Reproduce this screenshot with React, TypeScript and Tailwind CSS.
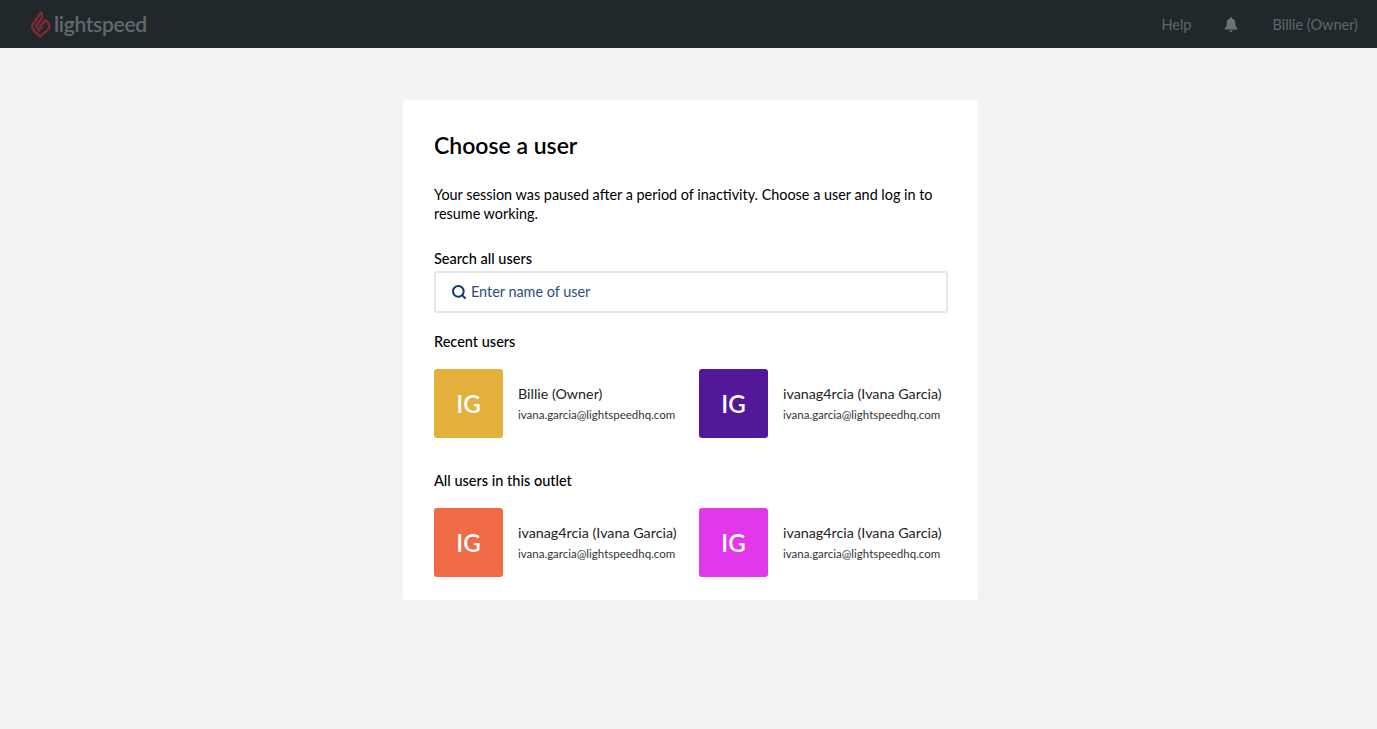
import { Search } from "lucide-react";

const recentUsers = [
  { name: "Billie (Owner)", color: "bg-[#e4b03c]" },
  { name: "ivanag4rcia (Ivana Garcia)", color: "bg-[#53179a]" },
];

const outletUsers = [
  { name: "ivanag4rcia (Ivana Garcia)", color: "bg-[#ef6a45]" },
  { name: "ivanag4rcia (Ivana Garcia)", color: "bg-[#e138ea]" },
];

function UserTile({ name, color }: { name: string; color: string }) {
  return (
    <div className="flex items-center">
      <div className={`flex h-[69px] w-[69px] shrink-0 items-center justify-center rounded-[3px] text-[24px] font-semibold text-white ${color}`}>
        IG
      </div>
      <div className="ml-[15px] whitespace-nowrap">
        <div className="text-[14.3px] leading-[20px] text-[#1d2327]">{name}</div>
        <div className="mt-[2px] text-[11.5px] leading-[18px] text-[#2f3538]">ivana.garcia@lightspeedhq.com</div>
      </div>
    </div>
  );
}

function Logo() {
  return (
    <div className="flex items-center">
      <svg width="20" height="28" viewBox="0 0 20 28" fill="none" stroke="#7a2a30" strokeWidth="2.6" strokeLinejoin="round">
        <path d="M10.5 1.8 L2 14 C0.6 16.2 1 18.5 2.6 20.3 L9 26.4 L16.6 20 C18.6 18 18.8 15.6 17.4 13.6 L15 10 L9.2 16 L11.6 18.6" />
        <path d="M10.5 1.8 L11.2 7.5 L6 14.5 C5.2 15.8 5.4 17 6.4 18 L9.4 21" />
      </svg>
      <span className="ml-[3px] pb-[2px] text-[21px] font-semibold leading-none tracking-[-0.3px] text-[#63696c]">lightspeed</span>
    </div>
  );
}

export default function App() {
  return (
    <div className="flex min-h-[729px] flex-col bg-[#f3f2f5] font-['Lato',sans-serif]">
      <header className="flex h-[48px] items-center justify-between bg-[#20282c] pl-[31px] pr-[19px]">
        <Logo />
        <nav className="flex items-center pt-[1px] text-[14.5px] text-[#5f6669]">
          <span>Help</span>
          <svg className="ml-[33px]" width="14" height="15" viewBox="0 0 14 15" fill="#6b7275">
            <path d="M7 0a1 1 0 0 0-1 1v.6C3.9 2.1 2.7 3.8 2.7 6c0 3.2-.9 4.3-2 5.4-.4.5-.1 1.1.5 1.1h11.6c.6 0 .9-.6.5-1.1-1.1-1.1-2-2.2-2-5.4 0-2.2-1.2-3.9-3.3-4.4V1a1 1 0 0 0-1-1z" />
            <path d="M5.3 13.2a1.7 1.7 0 0 0 3.4 0z" />
          </svg>
          <span className="ml-[34px]">Billie (Owner)</span>
        </nav>
      </header>

      <main className="flex justify-center pl-[4px] pt-[52px]">
        <div className="h-[500px] w-[575px] rounded-[3px] bg-white px-[31px] pt-[29px]">
          <h1 className="text-[23px] font-semibold leading-[32px] text-black">Choose a user</h1>

          <p className="mt-[24px] text-[14.4px] leading-[19px] text-black">
            Your session was paused after a period of inactivity. Choose a user and log in to resume working.
          </p>

          <div className="mt-[26px] text-[14.5px] font-medium leading-[19px] text-black">Search all users</div>
          <div className="mt-[3px] flex h-[42px] w-[514px] items-center rounded-[3px] border-2 border-[#e6e7e9] pl-[15px]">
            <Search size={16} strokeWidth={3} className="text-[#113a6b]" />
            <span className="ml-[4px] text-[14.4px] text-[#27507f]">Enter name of user</span>
          </div>

          <div className="mt-[19px] text-[14.5px] font-medium leading-[19px] text-black">Recent users</div>
          <div className="mt-[18px] grid w-[530px] grid-cols-[265px_265px]">
            {recentUsers.map((user) => (
              <UserTile key={user.color} name={user.name} color={user.color} />
            ))}
          </div>

          <div className="mt-[33px] text-[14.5px] font-medium leading-[19px] text-black">All users in this outlet</div>
          <div className="mt-[18px] grid w-[530px] grid-cols-[265px_265px]">
            {outletUsers.map((user) => (
              <UserTile key={user.color} name={user.name} color={user.color} />
            ))}
          </div>
        </div>
      </main>
    </div>
  );
}
